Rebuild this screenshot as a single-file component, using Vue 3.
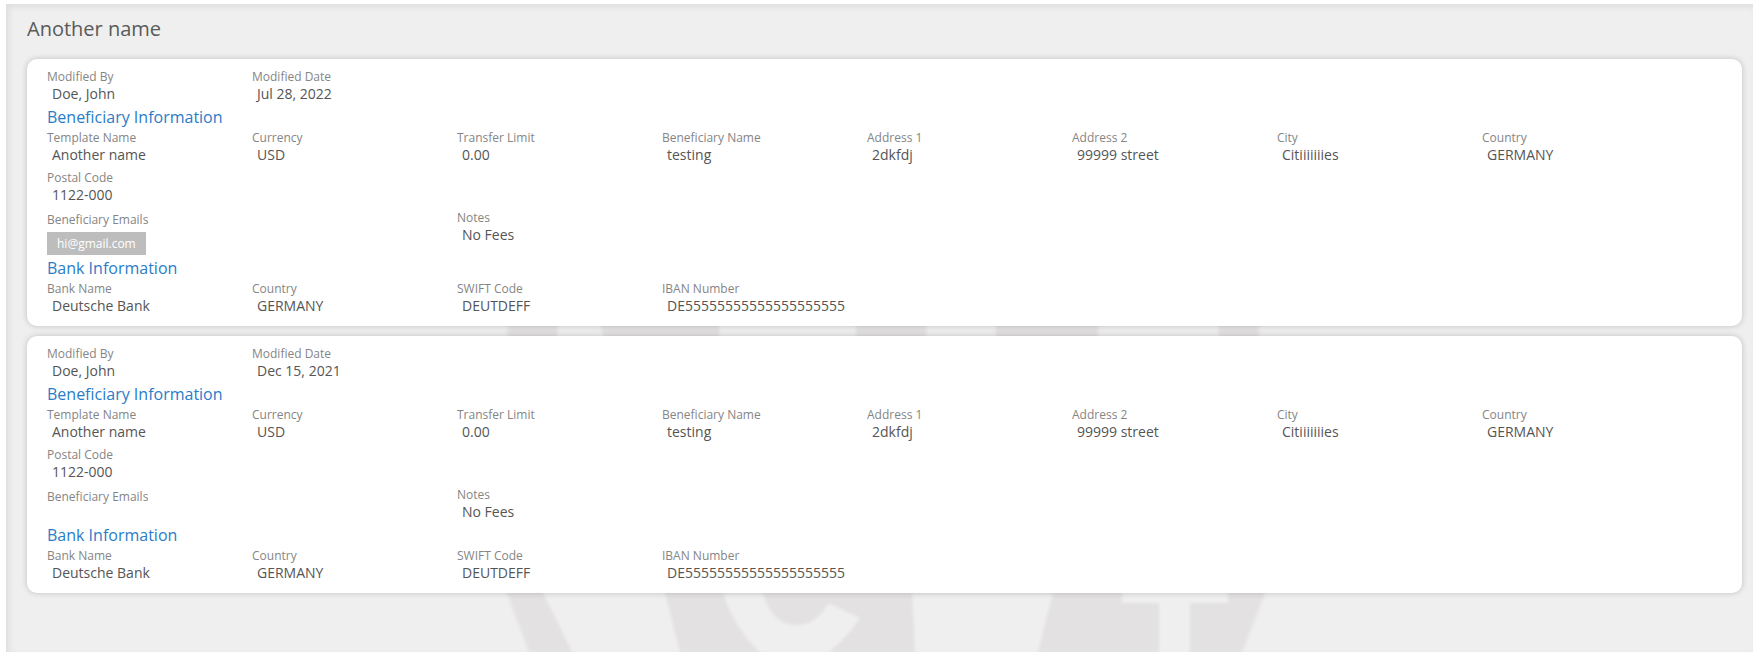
<script setup>
const versions = [
  { modified: 'Jul 28, 2022', emails: ['hi@gmail.com'] },
  { modified: 'Dec 15, 2021', emails: [] }
]

const beneficiary = [
  { label: 'Template Name', value: 'Another name' },
  { label: 'Currency', value: 'USD' },
  { label: 'Transfer Limit', value: '0.00' },
  { label: 'Beneficiary Name', value: 'testing' },
  { label: 'Address 1', value: '2dkfdj' },
  { label: 'Address 2', value: '99999 street' },
  { label: 'City', value: 'Citiiiiiiies' },
  { label: 'Country', value: 'GERMANY' },
  { label: 'Postal Code', value: '1122-000' }
]

const bank = [
  { label: 'Bank Name', value: 'Deutsche Bank' },
  { label: 'Country', value: 'GERMANY' },
  { label: 'SWIFT Code', value: 'DEUTDEFF' },
  { label: 'IBAN Number', value: 'DE55555555555555555555' }
]
</script>

<template>
  <div class="page">
    <!-- faint logo behind the cards -->
    <svg class="watermark" width="1753" height="652" viewBox="0 0 1753 652">
      <path class="dark" d="M508 300 L506 590 L529 652 L1242 652 L1265 593 L1258 300 Z" />
      <path class="light" d="M559 300 L595 300 L665 593 L680 652 L572 652 L543 593 Z" />
      <path class="light" d="M723 593 Q735 630 760 652 L829 652 Q850 635 860 618 L829 603 Q815 625 797 625 Q772 625 763 593 Z" />
      <path class="light" d="M912 593 L1053 593 L1038 652 L915 652 Z" />
      <path class="light" d="M1122 590 L1228 590 L1228 603 L1190 603 L1190 652 L1159 652 L1159 603 L1122 603 Z" />
      <rect class="light" x="719" y="320" width="137" height="20" />
      <rect class="light" x="926" y="320" width="70" height="20" />
      <rect class="light" x="1098" y="320" width="121" height="20" />
    </svg>

    <div class="title">Another name</div>

    <div v-for="item in versions" :key="item.modified" class="card">
      <div class="fields">
        <div class="field">
          <div class="label">Modified By</div>
          <div class="value">Doe, John</div>
        </div>
        <div class="field">
          <div class="label">Modified Date</div>
          <div class="value">{{ item.modified }}</div>
        </div>
      </div>

      <div class="heading">Beneficiary Information</div>
      <div class="fields">
        <div v-for="f in beneficiary" :key="f.label" class="field">
          <div class="label">{{ f.label }}</div>
          <div class="value">{{ f.value }}</div>
        </div>
      </div>

      <div class="fields extra">
        <div class="emails">
          <div class="label">Beneficiary Emails</div>
          <span v-for="mail in item.emails" :key="mail" class="chip">{{ mail }}</span>
        </div>
        <div class="field">
          <div class="label">Notes</div>
          <div class="value">No Fees</div>
        </div>
      </div>

      <div class="heading">Bank Information</div>
      <div class="fields">
        <div v-for="f in bank" :key="f.label" class="field">
          <div class="label">{{ f.label }}</div>
          <div class="value">{{ f.value }}</div>
        </div>
      </div>
    </div>
  </div>
</template>

<style>
body {
  background: #fff;
}
</style>

<style scoped>
.page {
  position: relative;
  margin: 4px 0 0 6px;
  height: 648px;
  overflow: hidden;
  padding: 11px 11px 0 21px;
  box-sizing: border-box;
  background: #efefef;
  font-family: "Open Sans", sans-serif;
}
.page::after {
  content: "";
  position: absolute;
  inset: 0;
  box-shadow: inset 3px 3px 6px rgba(0, 0, 0, 0.07);
  pointer-events: none;
}
.watermark {
  position: absolute;
  left: -6px;
  top: -4px;
  filter: blur(1.5px);
}
.dark {
  fill: #e3e1e2;
}
.light {
  fill: #efefef;
}
.title {
  position: relative;
  font-size: 20px;
  line-height: 28px;
  color: #5a5a5a;
  margin-bottom: 16px;
}
.card {
  position: relative;
  background: #fff;
  border-radius: 10px;
  box-shadow: 0 0 6px rgba(0, 0, 0, 0.2);
  padding: 10px 20px 11px;
  margin-bottom: 10px;
}
.fields {
  display: grid;
  grid-template-columns: repeat(8, 205px);
  row-gap: 6px;
}
.extra {
  margin-top: 6px;
}
.emails {
  grid-column: span 2;
  padding-top: 2px;
  display: flex;
  flex-direction: column;
  align-items: flex-start;
  margin-bottom: -1px;
}
.label {
  font-size: 12px;
  line-height: 16px;
  color: #858585;
}
.value {
  font-size: 14px;
  line-height: 18px;
  color: #555;
  padding-left: 5px;
}
.heading {
  font-size: 16px;
  line-height: 22px;
  color: #2a7cc9;
  margin: 3px 0 2px;
}
.chip {
  margin-top: 4px;
  background: #bdbdbd;
  color: #fff;
  font-size: 12px;
  line-height: 23px;
  padding: 0 10px;
}
</style>
